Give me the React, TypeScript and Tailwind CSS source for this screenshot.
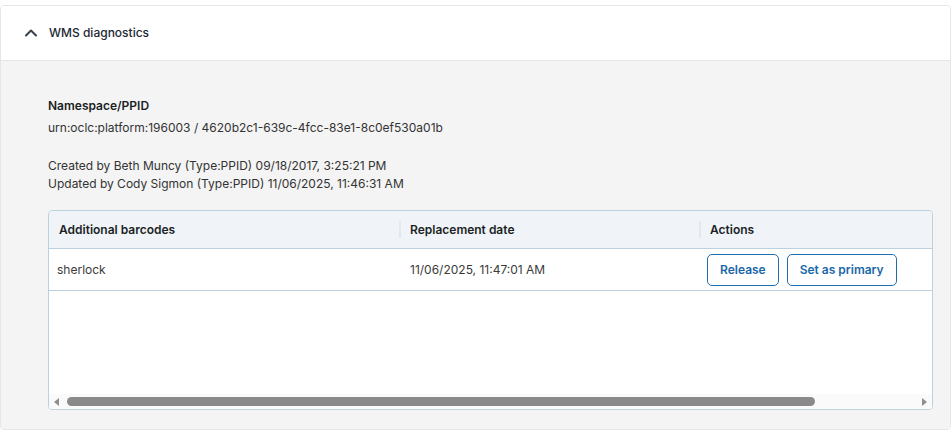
import { ChevronUp } from 'lucide-react'

const rows = [{ barcode: 'sherlock', date: '11/06/2025, 11:47:01 AM' }]

function HeaderCell({ label, divider }: { label: string; divider?: boolean }) {
  return (
    <div className="flex items-center h-full">
      {divider && <div className="w-[2px] h-[17px] bg-[#e3e8ee] mr-[9px]" />}
      <span className={`font-semibold text-[#1b1f24] ${divider ? '' : 'pl-[10px]'}`}>{label}</span>
    </div>
  )
}

function Scrollbar() {
  return (
    <div className="h-[15px] bg-[#fafafa] flex items-center px-[5px]">
      <div className="w-0 h-0 border-y-[4px] border-y-transparent border-r-[5px] border-r-[#8f8f8f]" />
      <div className="ml-[8px] w-[748px] h-[9px] rounded-full bg-[#8a8a8a]" />
      <div className="flex-1" />
      <div className="w-0 h-0 border-y-[4px] border-y-transparent border-l-[5px] border-l-[#8f8f8f]" />
    </div>
  )
}

export default function App() {
  return (
    <div className="w-[951px] h-[431px] bg-white pt-[5px] text-[12px] text-[#333] font-['Inter','Noto_Sans',sans-serif] overflow-hidden">
      <section className="border border-[#e6e6e6] rounded-[4px] overflow-hidden h-[425px]">
        <header className="h-[55px] bg-white flex items-center border-b border-[#e6e6e6]">
          <ChevronUp className="ml-[20px] w-[20px] h-[20px] text-[#39444f]" strokeWidth={2.5} />
          <h2 className="ml-[8px] text-[12px] font-medium text-[#1c2733]">WMS diagnostics</h2>
        </header>
        <div className="bg-[#f4f4f4] h-full pl-[47px] pr-[17px] pt-[36px]">
          <div className="font-semibold text-[#1b1f24] leading-[18px]">Namespace/PPID</div>
          <div className="mt-[4px] leading-[18px]">urn:oclc:platform:196003 / 4620b2c1-639c-4fcc-83e1-8c0ef530a01b</div>
          <div className="mt-[20px] leading-[18px]">Created by Beth Muncy (Type:PPID) 09/18/2017, 3:25:21 PM</div>
          <div className="leading-[18px]">Updated by Cody Sigmon (Type:PPID) 11/06/2025, 11:46:31 AM</div>

          <div className="mt-[17px] border border-[#bcd0de] rounded-[4px] bg-white overflow-hidden h-[200px] flex flex-col">
            <div className="grid grid-cols-[350px_300px_1fr] h-[38px] bg-[#f0f4f8] border-b border-[#bcd0de]">
              <HeaderCell label="Additional barcodes" />
              <HeaderCell label="Replacement date" divider />
              <HeaderCell label="Actions" divider />
            </div>
            {rows.map((r) => (
              <div key={r.barcode} className="grid grid-cols-[350px_300px_1fr] h-[42px] border-b border-[#bcd0de] items-center">
                <span className="pl-[8px] text-[#3a3a3a]">{r.barcode}</span>
                <span className="pl-[11px] text-[#3a3a3a]">{r.date}</span>
                <div className="flex gap-[8px] pl-[8px]">
                  <button className="h-[32px] px-[12px] border border-[#1f6fae] rounded-[5px] text-[#1a68a8] font-semibold">Release</button>
                  <button className="h-[32px] px-[12px] border border-[#1f6fae] rounded-[5px] text-[#1a68a8] font-semibold">Set as primary</button>
                </div>
              </div>
            ))}
            <div className="flex-1" />
            <Scrollbar />
          </div>
        </div>
      </section>
    </div>
  )
}
